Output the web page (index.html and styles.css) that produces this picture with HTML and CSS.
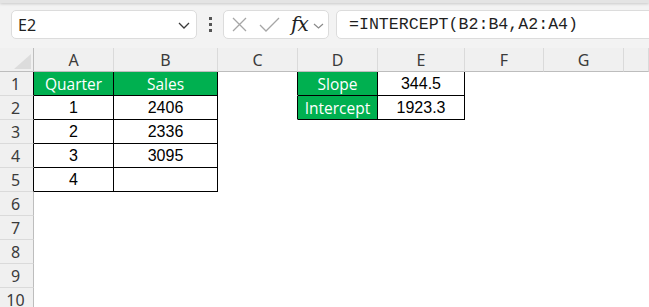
FILE: index.html
```html
<!DOCTYPE html>
<html>
<head>
<meta charset="utf-8">
<link rel="stylesheet" href="styles.css">
</head>
<body>
<div class="app">
  <div class="topshade"></div>
  <div class="toolbar">
    <div class="namebox">
      <span class="nb-text">E2</span>
      <svg class="nb-chev" width="12" height="7" viewBox="0 0 12 7"><path d="M1 1 L6 6 L11 1" fill="none" stroke="#3a3a3a" stroke-width="1.3"/></svg>
    </div>
    <div class="dots"><span></span><span></span><span></span></div>
    <div class="fxbox">
      <svg class="ic-x" width="15" height="15" viewBox="0 0 15 15"><path d="M1 1 L14 14 M14 1 L1 14" stroke="#a6a6a6" stroke-width="1.3" fill="none"/></svg>
      <svg class="ic-check" width="21" height="15" viewBox="0 0 21 15"><path d="M1 8 L7 14 L20 1" stroke="#a6a6a6" stroke-width="1.3" fill="none"/></svg>
      <span class="fx">fx</span>
      <svg class="fx-chev" width="11" height="6" viewBox="0 0 11 6"><path d="M1 1 L5.5 5 L10 1" fill="none" stroke="#8a8a8a" stroke-width="1.2"/></svg>
    </div>
    <div class="formula">=INTERCEPT(B2:B4,A2:A4)</div>
  </div>
  <div class="sheet">
    <div class="corner"><span class="tri"></span></div>
    <div class="ch">A</div><div class="ch">B</div><div class="ch">C</div><div class="ch">D</div><div class="ch">E</div><div class="ch">F</div><div class="ch">G</div><div class="ch last"></div>

    <div class="rh tb">1</div>
    <div class="c green bd">Quarter</div><div class="c green bd">Sales</div><div class="c bl"></div><div class="c green bd">Slope</div><div class="c bd">344.5</div><div class="c"></div><div class="c"></div><div class="c"></div>

    <div class="rh tb">2</div>
    <div class="c bd">1</div><div class="c bd">2406</div><div class="c bl"></div><div class="c green bd">Intercept</div><div class="c bd">1923.3</div><div class="c"></div><div class="c"></div><div class="c"></div>

    <div class="rh tb">3</div>
    <div class="c bd">2</div><div class="c bd">2336</div><div class="c"></div><div class="c"></div><div class="c"></div><div class="c"></div><div class="c"></div><div class="c"></div>

    <div class="rh tb">4</div>
    <div class="c bd">3</div><div class="c bd">3095</div><div class="c"></div><div class="c"></div><div class="c"></div><div class="c"></div><div class="c"></div><div class="c"></div>

    <div class="rh tb">5</div>
    <div class="c bd">4</div><div class="c bd"></div><div class="c"></div><div class="c"></div><div class="c"></div><div class="c"></div><div class="c"></div><div class="c"></div>

    <div class="rh">6</div>
    <div class="c"></div><div class="c"></div><div class="c"></div><div class="c"></div><div class="c"></div><div class="c"></div><div class="c"></div><div class="c"></div>
    <div class="rh">7</div>
    <div class="c"></div><div class="c"></div><div class="c"></div><div class="c"></div><div class="c"></div><div class="c"></div><div class="c"></div><div class="c"></div>
    <div class="rh">8</div>
    <div class="c"></div><div class="c"></div><div class="c"></div><div class="c"></div><div class="c"></div><div class="c"></div><div class="c"></div><div class="c"></div>
    <div class="rh">9</div>
    <div class="c"></div><div class="c"></div><div class="c"></div><div class="c"></div><div class="c"></div><div class="c"></div><div class="c"></div><div class="c"></div>
    <div class="rh">10</div>
    <div class="c"></div><div class="c"></div><div class="c"></div><div class="c"></div><div class="c"></div><div class="c"></div><div class="c"></div><div class="c"></div>
  </div>
</div>
</body>
</html>
```

FILE: styles.css
```css
* { box-sizing: border-box; }
html, body { margin: 0; padding: 0; }
body {
  width: 649px;
  height: 307px;
  overflow: hidden;
  background: #f3f3f3;
  font-family: "Noto Sans", "Open Sans", sans-serif;
}
.app { position: relative; width: 649px; height: 307px; overflow: hidden; }
.topshade {
  position: absolute;
  left: 0; top: 0; right: 0;
  height: 3px;
  background: #e4e4e4;
  box-shadow: 0 1px 3px rgba(0,0,0,0.18);
}
.toolbar {
  height: 48px;
  display: flex;
  align-items: flex-start;
  padding-top: 10px;
}
.namebox {
  margin-left: 11px;
  width: 186px;
  height: 29px;
  background: #fff;
  border: 1px solid #dcdcdc;
  border-radius: 5px;
  display: flex;
  align-items: center;
  padding-left: 6px;
  padding-right: 6px;
}
.nb-text { flex: 1; font-size: 16px; color: #222; }
.nb-chev { margin-top: 1px; }
.dots {
  width: 26px;
  height: 29px;
  display: flex;
  flex-direction: column;
  align-items: center;
  justify-content: center;
  gap: 3px;
}
.dots span { width: 3px; height: 3px; background: #555; display: block; }
.fxbox {
  width: 106px;
  height: 29px;
  background: #fff;
  border: 1px solid #dcdcdc;
  border-radius: 5px;
  display: flex;
  align-items: center;
  padding-left: 8px;
}
.ic-check { margin-left: 12px; }
.fx {
  margin-left: 11px;
  font-family: "DejaVu Serif", "Liberation Serif", serif;
  font-style: italic;
  font-size: 20px;
  color: #222;
  line-height: 1;
  margin-top: -2px;
  letter-spacing: -1px;
}
.fx-chev { margin-left: 5px; margin-top: 2px; }
.formula {
  margin-left: 7px;
  flex: 1;
  margin-right: -10px;
  height: 29px;
  background: #fff;
  border: 1px solid #dcdcdc;
  border-radius: 5px;
  padding-left: 12px;
  font-family: "Liberation Mono", "DejaVu Sans Mono", monospace;
  font-size: 16.6px;
  line-height: 27px;
  color: #1f1f1f;
}
.sheet {
  display: grid;
  grid-template-columns: 34px 80px 104px 80px 80px 87px 79px 80px 1fr;
  grid-auto-rows: 24px;
}
.corner {
  position: relative;
  background: #f0f0f0;
  border-right: 1px solid #bdbdbd;
  border-bottom: 1px solid #bdbdbd;
}
.tri {
  position: absolute;
  right: 2px;
  bottom: 2px;
  width: 0; height: 0;
  border-left: 17px solid transparent;
  border-bottom: 15px solid #dcdcdc;
}
.ch {
  background: #f0f0f0;
  border-right: 1px solid #dadada;
  border-bottom: 1px solid #bdbdbd;
  display: flex;
  align-items: center;
  justify-content: center;
  font-size: 16px;
  color: #3b3b3b;
  padding-top: 1px;
}
.rh {
  background: #f0f0f0;
  border-right: 1px solid #bdbdbd;
  border-bottom: 1px solid #dadada;
  display: flex;
  align-items: center;
  justify-content: center;
  font-size: 16px;
  color: #3b3b3b;
  padding-right: 2px;
}
.rh.tb { border-right-color: #000; }
.c {
  background: #fff;
  border-right: 1px solid #fff;
  border-bottom: 1px solid #fff;
  display: flex;
  align-items: center;
  justify-content: center;
  font-family: "Liberation Sans", Arial, sans-serif;
  font-size: 16px;
  color: #000;
}
.c.bd { border-right-color: #000; border-bottom-color: #000; }
.c.bl { border-right-color: #000; }
.c.green { background: #00b050; color: #fff; font-family: "Open Sans", "Noto Sans", sans-serif; font-size: 15.5px; }
```
